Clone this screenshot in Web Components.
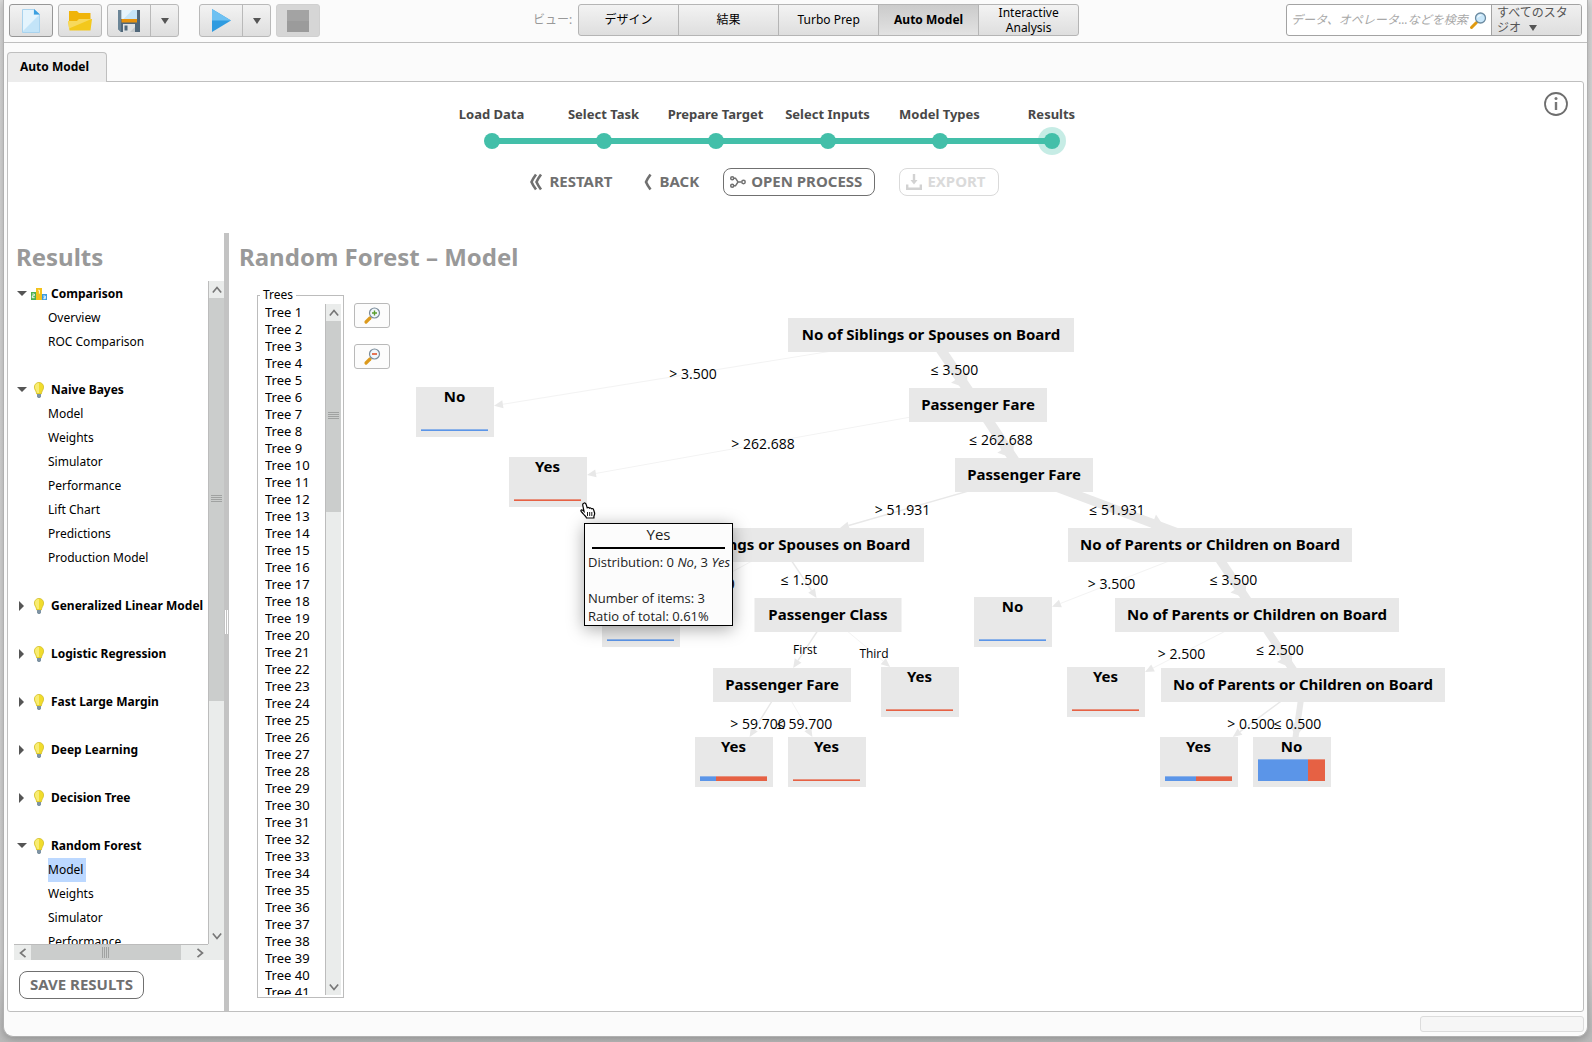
<!DOCTYPE html>
<html lang="ja">
<head>
<meta charset="utf-8">
<title>Auto Model</title>
<style>
  html, body { height: 100%; }
  body {
    margin: 0;
    font: 12px/16px "Noto Sans", "Noto Sans CJK JP", sans-serif;
    color: #000;
    background: linear-gradient(#d9d9d9 0, #d4d4d4 960px, #bababa 100%);
  }
</style>
</head>
<body>
<studio-app></studio-app>

<script>
const define = (name, html, setup) => customElements.define(name, class extends HTMLElement {
  constructor() {
    super();
    this.attachShadow({ mode: 'open' });
  }
  connectedCallback() {
    if (this.shadowRoot.childNodes.length) return;
    const t = document.createElement('template');
    t.innerHTML = '<style>*{box-sizing:border-box}button,input{font:inherit;color:inherit;margin:0}</style>' +
      (typeof html === 'function' ? html(this) : html);
    this.shadowRoot.append(t.content.cloneNode(true));
    if (setup) setup(this, this.shadowRoot);
  }
});

/* ---------- icons ---------- */
const ICONS = {
  file: `<svg width="18" height="24" viewBox="0 0 18 24"><path d="M.5.5h11.500l5.500 5v18h-17z" fill="#c3e4f8" stroke="#a9d3ee"/><path d="M1 1h10.500v5H17L1 22z" fill="#e4f4fd"/><path d="M12 0l6 5.500h-6z" fill="#3a9fe0"/></svg>`,
  folder: `<svg width="24" height="20" viewBox="0 0 24 20"><path d="M1 0h8l2 2h11.500v8H1z" fill="#f0b40a"/><path d="M0 10h9l2-2h13l-1.500 11.500h-21z" fill="#f3c81c"/><path d="M0 10h9l2-2h12.500L1 17.500z" fill="#f7d95c"/></svg>`,
  save: `<svg width="22" height="22" viewBox="0 0 22 22"><path d="M0 0h22v22H3l-3-3z" fill="#51687a"/><path d="M0 0h3v22l-3-3z" fill="#6b8597"/><path d="M3.500 0h15.500v9H3.500z" fill="#c7e6f8"/><path d="M3.500 0h11l-9 9h-2z" fill="#e6f5fd"/><path d="M3.500 9h15.500v3.500H3.500z" fill="#e8930c"/><path d="M5 14h12v8H5z" fill="#e0e2e3"/><path d="M6.500 15.500h3v5h-3z" fill="#51687a"/><path d="M12 22l5-5v5z" fill="#c6cacc"/></svg>`,
  play: `<svg width="19" height="23" viewBox="0 0 19 23"><path d="M0 0l19 11.500L0 23z" fill="#2f9be0"/><path d="M0 0l19 11.500H0z" fill="#6ec1f2"/></svg>`,
  stop: `<svg width="22" height="22" viewBox="0 0 22 22"><path d="M0 0h22v22H0z" fill="#9b9b9b"/><path d="M0 0h22v11H0z" fill="#a3a3a3"/></svg>`,
  caret: `<svg width="8" height="6" viewBox="0 0 8 6"><path d="M0 0h8L4 6z" fill="#555"/></svg>`,
  search: `<svg width="17" height="17" viewBox="0 0 17 17"><path d="M1.500 15.500l5-5" stroke="#e09a10" stroke-width="3" stroke-linecap="round"/><circle cx="10.500" cy="6" r="5" fill="#c9e7fa" stroke="#6b8aa0" stroke-width="1.300"/><path d="M7 6a3.500 3.500 0 0 1 5-3z" fill="#eef8fe"/></svg>`,
  zoomIn: `<svg width="17" height="17" viewBox="0 0 17 17"><path d="M2 15l4-4" stroke="#dc9a1c" stroke-width="3.200" stroke-linecap="round"/><circle cx="10.500" cy="6" r="5" fill="#f1f7fb" stroke="#7b8c9a" stroke-width="1.200"/><path d="M8 6h5M10.500 3.500v5" stroke="#5a9e2d" stroke-width="1.400"/></svg>`,
  zoomOut: `<svg width="17" height="17" viewBox="0 0 17 17"><path d="M2 15l4-4" stroke="#dc9a1c" stroke-width="3.200" stroke-linecap="round"/><circle cx="10.500" cy="6" r="5" fill="#f1f7fb" stroke="#7b8c9a" stroke-width="1.200"/><path d="M8 6h5" stroke="#e2542c" stroke-width="1.600"/></svg>`,
  info: `<svg width="24" height="24" viewBox="0 0 24 24"><circle cx="12" cy="12" r="11" fill="none" stroke="#6e6e6e" stroke-width="1.800"/><path d="M12 10v8" stroke="#777" stroke-width="2.400"/><circle cx="12" cy="6.500" r="1.500" fill="#777"/></svg>`,
  restart: `<svg width="12" height="16" viewBox="0 0 12 16" fill="none" stroke="#707070" stroke-width="2.600"><path d="M6 .5Q3 4.500 1.500 8 3 11.500 6 15.500M11 .5Q8 4.500 6.500 8 8 11.500 11 15.500"/></svg>`,
  back: `<svg width="8" height="16" viewBox="0 0 8 16" fill="none" stroke="#707070" stroke-width="2.600"><path d="M6.500 .5Q3.500 4.500 2 8 3.500 11.500 6.500 15.500"/></svg>`,
  process: `<svg width="16" height="12" viewBox="0 0 16 12" fill="none" stroke="#707070" stroke-width="1.500"><circle cx="2.200" cy="2.200" r="1.500"/><circle cx="2.200" cy="9.800" r="1.500"/><circle cx="13.500" cy="6" r="1.700"/><path d="M4 2.200h1.500L8 6h3.500M4 9.800h1.500L8 6"/></svg>`,
  export: `<svg width="16" height="16" viewBox="0 0 16 16" fill="none" stroke="#d2d2d2" stroke-width="2.400"><path d="M8 0v8M1.200 10.500v4.300h13.600v-4.300"/><path d="M4.500 6h7L8 10.500z" fill="#d2d2d2" stroke="none"/></svg>`,
  podium: `<svg width="16" height="12" viewBox="0 0 16 12"><path d="M0 4h5v8H0z" fill="#4caf50"/><path d="M5 0h6v12H5z" fill="#f2c21b"/><path d="M11 6h5v6h-5z" fill="#3a9be0"/><path d="M1.300 6h2v1.800h-2v1.900h2.300M7.200 2.200h1.200v3.500M12.300 8h2v2.700h-2M12.700 9.300h1.500" fill="none" stroke="#fff" stroke-width=".9"/></svg>`,
  bulb: `<svg width="10" height="16" viewBox="0 0 10 16"><path d="M5 .4A4.600 4.600 0 0 1 9.600 5C9.600 8 7.600 9 7.300 12H2.700C2.400 9 .4 8 .4 5A4.600 4.600 0 0 1 5 .4z" fill="#f1dc2c" stroke="#cdb81c" stroke-width=".7"/><path d="M5 1a4 4 0 0 0-4 4c0 2 1.500 3.500 2.200 6H5z" fill="#f8ec74"/><path d="M3 12h4v2.500L6 16H4l-1-1.500z" fill="#7e93a3"/></svg>`,
  hand: `<svg width="16" height="18" viewBox="0 0 16 18"><path d="M3.700 1.200c1.300-.7 2.200.2 2.500 1.300l1 3.300c.8-.6 1.800-.3 2.200.4.800-.5 1.700-.2 2.100.6 1-.4 1.900.1 2.200 1.200l.9 3c.3 1.300-.6 2.400-.7 3.500v1.500H6.500c-.3-1.800-2.300-2.500-3.300-4.200C2.300 10.500.600 9.600.900 8.500c.5-1.100 1.900-.5 3.100.8L2.700 3c-.1-.8.200-1.400 1-1.800z" fill="#fff" stroke="#000" stroke-width="1.200"/><path d="M7.500 10v4M9.700 10v4M11.800 10v4" stroke="#000" stroke-width=".9"/></svg>`,
};
define('ui-icon', el => `<style>:host{display:inline-flex;flex:none}svg{display:block;overflow:visible}</style>${ICONS[el.getAttribute('name')]}`);

/* ---------- scroll bar ---------- */
define('scroll-bar', el => {
  const h = el.hasAttribute('horizontal');
  return `<style>
    :host { display:flex; flex:none; flex-direction:${h ? 'row' : 'column'}; background:#eaeceb;
      ${h ? 'height:16px;border-top:1px solid #bcbcbc' : 'width:16px;border-left:1px solid #bcbcbc'}; box-sizing:border-box }
    button { flex:none; border:0; padding:0; background:none; display:grid; place-items:center; width:${h ? '17px' : 'auto'}; height:${h ? 'auto' : '17px'} }
    .track { flex:1; min-height:0; display:flex; flex-direction:inherit }
    .thumb { background:#cbcdcc; flex:0 0 ${el.getAttribute('size')}%; display:grid; place-items:center }
    .grip { ${h ? 'width:8px;height:11px' : 'width:11px;height:8px'};
      background:repeating-linear-gradient(${h ? 'to right' : 'to bottom'}, #a0a2a1 0 1px, transparent 1px 2px) }
    path { fill:none; stroke:#777; stroke-width:2 }
  </style>
  <button aria-label="back"><svg width="10" height="10" viewBox="0 0 12 12"><path d="${h ? 'M9 1L3 6l6 5' : 'M1 9l5-6 5 6'}"/></svg></button>
  <div class="track"><div class="thumb"><div class="grip"></div></div></div>
  <button aria-label="forward"><svg width="10" height="10" viewBox="0 0 12 12"><path d="${h ? 'M3 1l6 5-6 5' : 'M1 3l5 6 5-6'}"/></svg></button>`;
});

/* ---------- toolbar ---------- */
define('tool-button', el => `<style>
  :host { display:flex; height:33px; border:1px solid #b9b9b9; border-radius:3px; background:linear-gradient(#f3f3f3,#dedede); box-sizing:border-box }
  :host([focused]) { border-color:#979797 }
  :host([off]) { background:#d6d6d6; border-color:#d0d0d0 }
  button { border:0; background:none; padding:0; width:42px; display:grid; place-items:center }
  .more { width:28px; border-left:1px solid #b9b9b9 }
</style>
<button aria-label="${el.getAttribute('label')}" ${el.hasAttribute('off') ? 'disabled' : ''}><slot></slot></button>
${el.hasAttribute('menu') ? '<button class="more" aria-label="menu"><ui-icon name="caret"></ui-icon></button>' : ''}`);

define('view-switch', `<style>
  :host { display:flex; align-items:center; gap:6px; margin-left:6px }
  .label { color:#999 }
  .seg { display:flex; height:32px; border:1px solid #b5b5b5; border-radius:3px; overflow:hidden; background:linear-gradient(#f3f3f3,#dedede) }
  button { width:100px; border:0; border-left:1px solid #b5b5b5; padding:0 0 2px; background:none; line-height:15px }
  button:first-child { border-left:0; width:99px }
  button[aria-pressed=true] { background:linear-gradient(#cbcbcb,#e2e2e2); font-weight:bold }
</style>
<span class="label">ビュー:</span>
<div class="seg"><button>デザイン</button><button>結果</button><button>Turbo Prep</button><button aria-pressed="true">Auto Model</button><button>Interactive<br>Analysis</button></div>`);

define('search-box', `<style>
  :host { display:flex; height:32px; width:296px; border:1px solid #a3a3a3; border-radius:3px; background:#fff; box-sizing:border-box; overflow:hidden }
  label { flex:1; min-width:0; display:flex; align-items:center; padding:0 4px }
  input { flex:1; min-width:0; border:0; padding:0; background:none; outline:0 }
  input::placeholder { color:#a8a8a8; font-style:italic; opacity:1 }
  button { width:90px; border:0; border-left:1px solid #a3a3a3; padding:0 5px 2px; text-align:left; line-height:15px; color:#555; background:linear-gradient(#f0f0f0,#dedede) }
  ui-icon { vertical-align:1px; margin-left:8px }
  label ui-icon { margin:0 }
</style>
<label><input type="text" aria-label="検索" placeholder="データ、オペレータ...などを検索"><ui-icon name="search"></ui-icon></label>
<button aria-haspopup="listbox">すべてのスタ<br>ジオ<ui-icon name="caret"></ui-icon></button>`);

define('app-toolbar', `<style>
  :host { display:flex; justify-content:space-between; align-items:flex-start; padding:4px 5px; height:43px; box-sizing:border-box; border-bottom:1px solid #bfbfbf }
  .tools { display:flex; gap:5px }
  .run { margin-left:15px }
</style>
<div class="tools">
  <tool-button focused label="New"><ui-icon name="file"></ui-icon></tool-button>
  <tool-button label="Open"><ui-icon name="folder"></ui-icon></tool-button>
  <tool-button menu label="Save"><ui-icon name="save"></ui-icon></tool-button>
  <tool-button menu class="run" label="Run"><ui-icon name="play"></ui-icon></tool-button>
  <tool-button off label="Stop"><ui-icon name="stop"></ui-icon></tool-button>
</div>
<view-switch></view-switch>
<search-box></search-box>`);

/* ---------- wizard header ---------- */
define('wizard-step', `<style>
  :host { display:block; width:112px; text-align:center; --from:0; --to:0 }
  :host([first]) { --from:50% }
  :host([last]) { --to:50% }
  .name { font-size:13px; line-height:20px; font-weight:bold; color:#484848; white-space:nowrap }
  .rail { position:relative; height:28px; margin-top:3px; display:grid; place-items:center }
  .rail::before { content:""; position:absolute; left:var(--from); right:var(--to); top:11px; height:6px; background:#43bfa9 }
  .dot { position:relative; width:16px; height:16px; border-radius:50%; background:#43bfa9 }
  :host([last]) .dot { box-shadow:0 0 0 6px rgba(67,191,169,.3) }
</style>
<div class="name"><slot></slot></div><div class="rail"><div class="dot"></div></div>`);

define('action-button', el => `<style>
  :host { display:block }
  button { display:flex; align-items:center; gap:7px; height:28px; border:0; padding:0; background:none; color:#707070; font-weight:bold; font-size:15px; line-height:20px; white-space:nowrap }
  .text { padding-bottom:2px }
  :host([boxed]) button { border:1px solid #707070; border-radius:8px; padding:0 12px 0 6px; gap:5px; background:#fff }
  :host([plainbox]) button { border:1px solid #707070; border-radius:8px; padding:0 10px; background:#fff }
  button:disabled { color:#dadada; border-color:#dadada !important }
</style>
<button ${el.hasAttribute('off') ? 'disabled' : ''}><slot name="icon"></slot><span class="text"><slot></slot></span></button>`);

define('wizard-header', `<style>
  :host { display:flex }
  .main { flex:1; display:flex; flex-direction:column; align-items:center; padding:22px 0 37px }
  .steps { display:flex }
  .actions { display:flex; gap:24px; margin-top:13px; padding-right:14px }
  .first { margin-right:8px }
  .info { width:48px; padding:10px 15px 0 9px }
  .info button { border:0; padding:0; background:none; display:block }
</style>
<div class="main">
  <div class="steps">
    <wizard-step first>Load Data</wizard-step><wizard-step>Select Task</wizard-step><wizard-step>Prepare Target</wizard-step>
    <wizard-step>Select Inputs</wizard-step><wizard-step>Model Types</wizard-step><wizard-step last>Results</wizard-step>
  </div>
  <div class="actions">
    <action-button class="first"><ui-icon slot="icon" name="restart"></ui-icon>RESTART</action-button>
    <action-button><ui-icon slot="icon" name="back"></ui-icon>BACK</action-button>
    <action-button boxed><ui-icon slot="icon" name="process"></ui-icon>OPEN PROCESS</action-button>
    <action-button boxed off><ui-icon slot="icon" name="export"></ui-icon>EXPORT</action-button>
  </div>
</div>
<div class="info"><button aria-label="Info"><ui-icon name="info"></ui-icon></button></div>`);

/* ---------- results navigation ---------- */
define('nav-group', el => {
  const items = (el.getAttribute('items') || '').split(',').filter(Boolean);
  return `<style>
    :host { display:block; margin-bottom:24px }
    .head { display:flex; align-items:center; height:24px; padding-left:3px; font-weight:bold; white-space:nowrap }
    .tri { width:14px; flex:none } .tri svg { display:block }
    .pic { width:16px; flex:none; display:flex; justify-content:center; margin-right:4px }
    ul { list-style:none; margin:0; padding:0 0 0 34px }
    li { height:24px; line-height:24px }
    a { display:inline-block; color:inherit; text-decoration:none; padding-right:3px; white-space:nowrap }
    a[aria-current] { background:#bcd8ff }
  </style>
  <div class="head"><span class="tri"><svg width="10" height="10" viewBox="0 0 10 10"><path d="${items.length ? 'M0 2h10L5 7z' : 'M2 0v10l5-5z'}" fill="#555"/></svg></span>
  <span class="pic"><ui-icon name="${el.getAttribute('icon') || 'bulb'}"></ui-icon></span><slot></slot></div>
  ${items.length ? `<ul>${items.map(i => `<li><a href="#" ${el.getAttribute('current') === i ? 'aria-current="page"' : ''}>${i}</a></li>`).join('')}</ul>` : ''}`;
});

const ALL = 'Model,Weights,Simulator,Performance,Lift Chart,Predictions,Production Model';
define('results-nav', `<style>
  :host { display:flex; flex-direction:column; width:216px; flex:none; padding:8px 0 12px 6px; box-sizing:border-box }
  h2 { margin:0 0 8px 2px; font-size:24px; line-height:32px; color:#999 }
  .box { flex:1; min-height:0; display:flex; flex-direction:column }
  .row { flex:1; min-height:0; display:flex }
  nav { flex:1; min-width:0; overflow:hidden; padding-top:1px }
  .bottom { display:flex; background:#eaeceb }
  .bottom scroll-bar { flex:1 } .corner { width:16px }
  .save { display:flex; padding:11px 0 0 5px }
</style>
<h2>Results</h2>
<div class="box">
  <div class="row">
    <nav>
      <nav-group icon="podium" items="Overview,ROC Comparison">Comparison</nav-group>
      <nav-group items="${ALL}">Naive Bayes</nav-group>
      <nav-group>Generalized Linear Model</nav-group>
      <nav-group>Logistic Regression</nav-group>
      <nav-group>Fast Large Margin</nav-group>
      <nav-group>Deep Learning</nav-group>
      <nav-group>Decision Tree</nav-group>
      <nav-group items="${ALL}" current="Model">Random Forest</nav-group>
    </nav>
    <scroll-bar size="64"></scroll-bar>
  </div>
  <div class="bottom"><scroll-bar horizontal size="94"></scroll-bar><div class="corner"></div></div>
</div>
<div class="save"><action-button plainbox>SAVE RESULTS</action-button></div>`);

/* ---------- list of trees ---------- */
define('tree-list', `<style>
  :host { display:flex; width:87px; flex:none }
  fieldset { flex:1; min-width:0; margin:0; padding:1px 2px 2px 7px; border:1px solid #bcbcbc; display:flex; font-size:13px }
  legend { padding:0 3px; margin-left:-5px; line-height:16px; font-size:12px }
  ul { flex:1; min-width:0; overflow:hidden; list-style:none; margin:0; padding:0; line-height:17px; white-space:nowrap }
</style>
<fieldset><legend>Trees</legend><ul></ul><scroll-bar size="29"></scroll-bar></fieldset>`,
(el, root) => {
  const ul = root.querySelector('ul');
  for (let i = 1; i <= 41; i++) {
    const li = document.createElement('li');
    li.textContent = 'Tree ' + i;
    ul.append(li);
  }
});

/* ---------- decision tree diagram ---------- */
define('tree-node', `<style>
  :host { position:absolute; display:block; background:#e8e8e8; text-align:center; font-weight:bold; font-size:15px; line-height:32px; white-space:nowrap; height:34px; transform:translateX(-50%) }
  :host([leaf]) { height:50px; width:78px; line-height:18px; padding:0 6px 6px 5px; box-sizing:border-box }
  .bar { display:none }
  :host([leaf]) .bar { display:flex; position:absolute; left:5px; right:6px; bottom:6px; height:var(--h);
    background:linear-gradient(rgba(232,232,232,.35) 1px, transparent 1px), linear-gradient(to right, #5b95e8 var(--no), #e66144 var(--no)) }
</style><slot></slot><div class="bar"></div>`);

define('node-tooltip', `<style>
  :host { display:block; position:absolute; width:149px; box-sizing:border-box; border:1px solid #000; background:#fcfcfc; font-family:"Open Sans",sans-serif; font-size:13px; line-height:18px; color:#222; box-shadow:0 3px 16px rgba(0,0,0,.35); white-space:nowrap }
  .title { font-size:15px; line-height:21px; text-align:center; margin-bottom:2px }
  .rule { height:2px; background:#000; margin:0 7px 4px }
  .body { padding-left:3px }
</style><div class="title"><slot name="title"></slot></div><div class="rule"></div><div class="body"><slot></slot></div>`);

/* x is the node's centre, level its row; no is the share of "No" in a leaf, h its bar height */
const SIB = ['No of Siblings or Spouses on Board', 286], PAR = ['No of Parents or Children on Board', 284],
      FARE = ['Passenger Fare', 138], CLS = ['Passenger Class', 147];
const NODES = {
  a:{t:SIB,x:531,l:0}, n1:{leaf:'No',x:55,l:1,no:100,h:2}, b:{t:FARE,x:578,l:1},
  y1:{leaf:'Yes',x:148,l:2,no:0,h:2}, c:{t:FARE,x:624,l:2},
  d:{t:SIB,x:381,l:3}, e:{t:PAR,x:810,l:3},
  f:{leaf:'No',x:241,l:4,no:100,h:2}, g:{t:CLS,x:428,l:4}, h:{leaf:'No',x:613,l:4,no:100,h:2}, i:{t:PAR,x:857,l:4},
  j:{t:FARE,x:382,l:5}, k:{leaf:'Yes',x:520,l:5,no:0,h:2}, y2:{leaf:'Yes',x:706,l:5,no:0,h:2}, m:{t:PAR,x:903,l:5},
  n:{leaf:'Yes',x:334,l:6,no:24,h:5}, o:{leaf:'Yes',x:427,l:6,no:0,h:2},
  p:{leaf:'Yes',x:799,l:6,no:47,h:5}, q:{leaf:'No',x:892,l:6,no:74,h:22},
};
const EDGES = [
  ['a','n1','> 3.500',1], ['a','b','≤ 3.500',10], ['b','y1','> 262.688',1], ['b','c','≤ 262.688',10],
  ['c','d','> 51.931',2], ['c','e','≤ 51.931',9], ['d','f','> 1.500',1], ['d','g','≤ 1.500',2],
  ['g','j','First',2], ['g','k','Third',1], ['j','n','> 59.700',2], ['j','o','≤ 59.700',1],
  ['e','h','> 3.500',1], ['e','i','≤ 3.500',9], ['i','y2','> 2.500',1], ['i','m','≤ 2.500',8],
  ['m','p','> 0.500',2], ['m','q','≤ 0.500',6],
];
define('tree-diagram', `<style>
  :host { display:block; position:relative; flex:1; min-width:0 }
  svg { position:absolute; inset:0; width:100%; height:100%; overflow:visible }
  .edge { position:absolute; transform:translate(-50%,-50%); font-family:"Open Sans",sans-serif; font-size:14px; line-height:18px; white-space:nowrap }
  .word { font-size:12px }
  node-tooltip { left:184px; top:242px }
  .cursor { position:absolute; left:180px; top:221px }
</style><svg aria-hidden="true"></svg>
<div class="nodes"></div>
<node-tooltip><span slot="title">Yes</span>Distribution: 0 <i>No</i>, 3 <i>Yes</i><br><br>Number of items: 3<br>Ratio of total: 0.61%</node-tooltip>
<ui-icon class="cursor" name="hand"></ui-icon>`,
(el, root) => {
  const layer = root.querySelector('.nodes');
  const top = n => 37 + n.l * 70 - (n.leaf ? 1 : 0);
  const box = n => ({ x: n.x, y: top(n) + (n.leaf ? 25 : 17), hw: n.leaf ? 39 : n.t[1] / 2, hh: n.leaf ? 25 : 17 });
  for (const n of Object.values(NODES)) {
    const node = document.createElement('tree-node');
    node.style.left = n.x + 'px';
    node.style.top = top(n) + 'px';
    if (n.leaf) {
      node.setAttribute('leaf', '');
      node.style.setProperty('--no', n.no + '%');
      node.style.setProperty('--h', n.h + 'px');
    } else node.style.width = n.t[1] + 'px';
    node.textContent = n.leaf || n.t[0];
    layer.append(node);
  }
  let paths = '';
  for (const [from, to, text, w] of EDGES) {
    const s = box(NODES[from]), t = box(NODES[to]);
    const dx = t.x - s.x, dy = t.y - s.y, len = Math.hypot(dx, dy), ux = dx / len, uy = dy / len;
    const back = Math.min(t.hw / Math.abs(ux || 1e-6), t.hh / Math.abs(uy));
    const tipX = t.x - ux * back, tipY = t.y - uy * back;
    const L = w > 3 ? 13 : 9, W = w > 3 ? w / 2 + 5 : 4;
    const bx = tipX - ux * L, by = tipY - uy * L;
    paths += `<path d="M${s.x} ${s.y}L${w > 3 ? t.x : bx} ${w > 3 ? t.y : by}" stroke="${w === 1 ? '#f3f3f3' : '#e8e8e8'}" stroke-width="${w === 2 ? 1.4 : w}"/>` +
      `<path d="M${tipX} ${tipY}L${bx - uy * W} ${by + ux * W}L${bx + uy * W} ${by - ux * W}z" fill="#e8e8e8"/>`;
    const label = document.createElement('span');
    label.className = /\d/.test(text) ? 'edge' : 'edge word';
    label.style.left = (s.x + t.x) / 2 + 'px';
    label.style.top = (s.y + t.y) / 2 + 'px';
    label.textContent = text;
    layer.append(label);
  }
  root.querySelector('svg').innerHTML = paths;
});

define('model-view', `<style>
  :host { display:flex; flex-direction:column; flex:1; min-width:0; padding:8px 0 13px 10px }
  h2 { margin:0 0 8px; font-size:24px; line-height:32px; color:#999 }
  .row { flex:1; min-height:0; display:flex; gap:10px; padding-left:18px }
  tree-list { margin-top:6px }
  .zoom { display:flex; flex-direction:column; gap:16px; padding-top:22px }
  .zoom button { width:36px; height:25px; padding:0; border:1px solid #b9b9b9; border-radius:3px; background:#fcfcfc; display:grid; place-items:center }
</style>
<h2>Random Forest – Model</h2>
<div class="row">
  <tree-list></tree-list>
  <div class="zoom"><button aria-label="Zoom in"><ui-icon name="zoomIn"></ui-icon></button><button aria-label="Zoom out"><ui-icon name="zoomOut"></ui-icon></button></div>
  <tree-diagram></tree-diagram>
</div>`);

define('split-bar', `<style>
  :host { display:grid; place-items:center; width:5px; flex:none; background:#c3c3c3 }
  div { width:3px; height:24px; border:solid #fff; border-width:0 1px }
</style><div></div>`);

define('studio-app', `<style>
  :host { display:block; height:100%; box-sizing:border-box; padding:0 4px 5px 3px }
  .window { height:100%; min-height:600px; display:flex; flex-direction:column; background:#fbfbfb; border:1px solid #b0b0b0; border-top:0; border-radius:0 0 10px 10px; box-shadow:0 2px 8px rgba(0,0,0,.25) }
  .tabs { display:flex; padding:9px 3px 0 }
  .tab { height:30px; padding:0 17px 2px 12px; border:1px solid #bfbfbf; border-bottom:0; border-radius:4px 4px 0 0; background:#ececec; font-weight:bold; margin-bottom:-1px; position:relative }
  .panel { flex:1; min-height:0; margin:0 3px; display:flex; flex-direction:column; background:#fff; border:1px solid #bfbfbf; border-radius:0 3px 3px 3px }
  .body { flex:1; min-height:0; display:flex }
  .status { display:flex; justify-content:flex-end; padding:4px 3px }
  .progress { width:164px; height:16px; border:1px solid #dcdcdc; border-radius:3px; background:#f6f6f6 }
</style>
<div class="window">
  <app-toolbar></app-toolbar>
  <div class="tabs"><button class="tab">Auto Model</button></div>
  <div class="panel">
    <wizard-header></wizard-header>
    <div class="body"><results-nav></results-nav><split-bar></split-bar><model-view></model-view></div>
  </div>
  <div class="status"><div class="progress"></div></div>
</div>`);
</script>
</body>
</html>
